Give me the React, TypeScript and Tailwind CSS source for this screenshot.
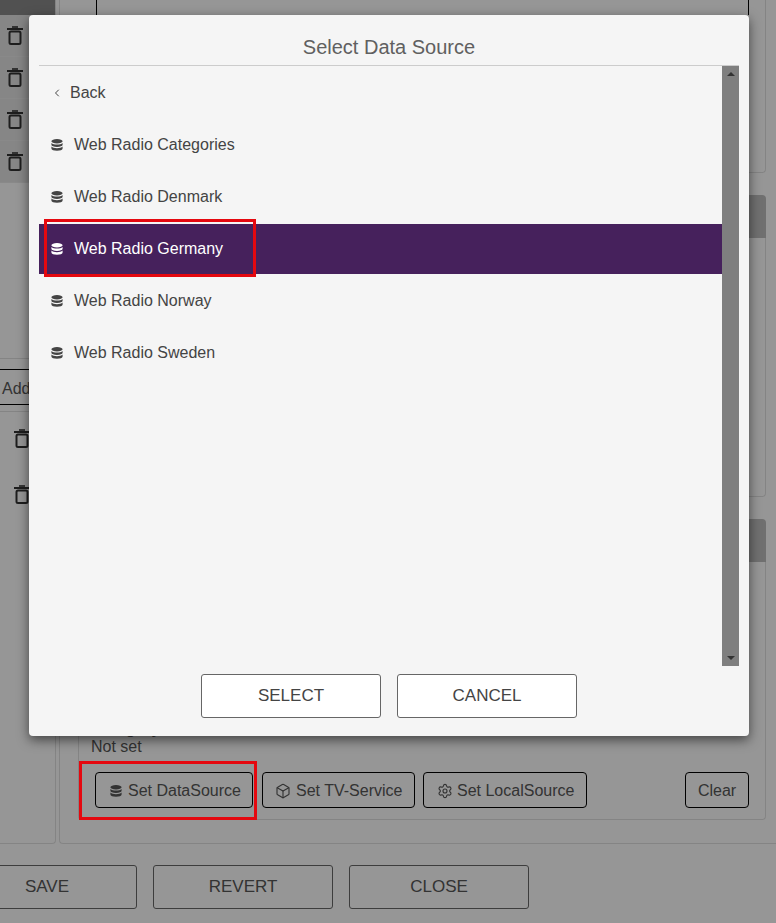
import type { ReactNode } from 'react';
import { ChevronLeft, Box, Settings } from 'lucide-react';

const sources = [
  'Web Radio Categories',
  'Web Radio Denmark',
  'Web Radio Germany',
  'Web Radio Norway',
  'Web Radio Sweden',
];

function DbIcon({ className }: { className?: string }) {
  return (
    <svg viewBox="0 0 12 12" className={className} fill="currentColor">
      <ellipse cx="6" cy="2.3" rx="5.6" ry="2.2" />
      <path d="M.4 3.9C1.5 5.2 3.6 5.6 6 5.6S10.500 5.200 11.600 3.900V5.700C11.600 7 9.100 7.900 6 7.900S.4 7 .4 5.700Z" />
      <path d="M.4 7.500C1.500 8.800 3.600 9.200 6 9.200S10.500 8.800 11.600 7.500V9.500C11.600 10.800 9.100 11.800 6 11.800S.4 10.800 .4 9.500Z" />
    </svg>
  );
}

function TrashIcon() {
  return (
    <svg viewBox="0 0 16 19" className="w-[16px] h-[19px] text-[#333]" fill="none" stroke="currentColor" strokeWidth="2">
      <path d="M5 1H11" strokeWidth="1.6" />
      <path d="M0 3H16" />
      <rect x="2.500" y="5.500" width="11" height="12.500" rx="1.500" />
    </svg>
  );
}

function TrashRow() {
  return (
    <div className="h-[42px] flex items-center pl-[7px] border-b border-[#e4e4e4] bg-[#e0e0e0]">
      <TrashIcon />
    </div>
  );
}

function SmallButton({ icon, label, className }: { icon?: ReactNode; label: string; className?: string }) {
  return (
    <button className={`h-9 flex items-center border border-black rounded-[4px] text-[16px] text-[#555] pt-[2px] ${className ?? ''}`}>
      {icon}
      {label}
    </button>
  );
}

export default function App() {
  return (
    <div className="relative w-[776px] h-[923px] overflow-hidden bg-[#fafafa] font-['Liberation_Sans',Arial,sans-serif] text-[#555]">
      {/* page behind the dialog */}
      <div className="flex h-[844px] gap-[3px]">
        <div className="w-[56px] shrink-0 border-r border-b border-[#ddd] rounded-br-[4px] flex flex-col">
          <div className="h-[15px] bg-[#888]" />
          <TrashRow />
          <TrashRow />
          <TrashRow />
          <TrashRow />
          <div className="h-[176px] border-b border-[#ddd]" />
          <div className="mt-[10px] h-[36px] border-y border-black text-[16px] pl-[2px] pt-[3px] flex items-center">Add</div>
          <div className="mt-[6px] border-t border-[#ddd] pl-[14px] pt-[17px] flex flex-col gap-[37px]">
            <TrashIcon />
            <TrashIcon />
          </div>
        </div>
        <div className="flex-1 border-l border-b border-[#ddd] rounded-bl-[4px] pl-[18px] flex flex-col">
          <div className="w-[688px] flex-1 flex flex-col">
            <div className="h-[173px] border-r border-b border-[#ddd] rounded-br-[4px] pl-[18px]">
              <div className="h-[15px] w-[653px] border-x border-black" />
            </div>
            <div className="mt-[22px] h-[43px] bg-[#bbb] rounded-t-[4px]" />
            <div className="h-[259px] border-r border-b border-[#ddd] rounded-b-[4px]" />
            <div className="mt-[22px] h-[43px] bg-[#bbb] rounded-t-[4px]" />
            <div className="flex-1 border-x border-b border-[#ddd] rounded-b-[4px] pl-[12px] pr-[16px] pt-[158px]">
              <div className="text-[16px] leading-[18px] font-bold">Category</div>
              <div className="text-[16px] leading-[18px]">Not set</div>
              <div className="mt-[16px] ml-[4px] flex items-center gap-2">
                <SmallButton icon={<DbIcon className="w-[12px] h-[12px] mr-[6px]" />} label="Set DataSource" className="w-[158px] pl-[14px] mr-[1px]" />
                <SmallButton icon={<Box size={16} strokeWidth={1.7} className="mr-[5px]" />} label="Set TV-Service" className="w-[153px] pl-[12px]" />
                <SmallButton icon={<Settings size={16} strokeWidth={1.7} className="mr-[4px]" />} label="Set LocalSource" className="w-[164px] pl-[13px]" />
                <SmallButton label="Clear" className="w-[64px] ml-auto justify-center" />
              </div>
            </div>
          </div>
          <div className="h-[23px]" />
        </div>
      </div>
      <div className="mt-[21px] ml-[-43px] flex gap-4 text-[17px]">
        {['SAVE', 'REVERT', 'CLOSE'].map((label) => (
          <button key={label} className="w-[180px] h-[44px] border border-[#666] rounded-[3px] text-[#555]">
            {label}
          </button>
        ))}
      </div>

      {/* backdrop */}
      <div className="absolute inset-0 bg-black/40" />

      {/* callout round the button behind the dialog */}
      <div className="absolute left-[79px] top-[761px] w-[178px] h-[59px] border-[3px] border-[#e5080f]" />

      {/* dialog */}
      <div className="absolute left-[29px] top-[15px] w-[720px] h-[721px] bg-[#f5f5f5] rounded-[4px] shadow-[0_4px_12px_rgba(0,0,0,0.55)] px-[10px] flex flex-col">
        <h2 className="h-[51px] shrink-0 border-b border-[#ccc] flex items-center justify-center pt-[13px] text-[20px] font-normal text-[#606060]">
          Select Data Source
        </h2>
        <div className="h-[600px] flex">
          <div className="flex-1 pt-[2px] text-[16px] text-[#444]">
            <div className="h-[50px] flex items-center pl-[12px] gap-[7px]">
              <ChevronLeft size={12} strokeWidth={2} />
              Back
            </div>
            {sources.map((name, i) => (
              <div
                key={name}
                className={`h-[50px] mt-[2px] flex items-center pl-[12px] gap-[11px] ${i === 2 ? 'bg-[#46215c] text-white' : ''}`}
              >
                <DbIcon className="w-[12px] h-[12px]" />
                {name}
              </div>
            ))}
          </div>
          <div className="w-[17px] bg-[#7f7f7f] flex flex-col justify-between items-center py-[6px]">
            <span className="w-0 h-0 border-x-[4px] border-x-transparent border-b-[4px] border-b-[#333]" />
            <span className="w-0 h-0 border-x-[4px] border-x-transparent border-t-[4px] border-t-[#333]" />
          </div>
        </div>
        <div className="flex justify-center gap-4 pt-[8px] text-[17px]">
          <button className="w-[180px] h-[44px] border border-[#666] rounded-[3px] bg-white text-[#444]">SELECT</button>
          <button className="w-[180px] h-[44px] border border-[#666] rounded-[3px] bg-white text-[#444]">CANCEL</button>
        </div>
      </div>

      {/* callout round the selected row */}
      <div className="absolute left-[44px] top-[219px] w-[212px] h-[58px] border-[3px] border-[#e5080f]" />
    </div>
  );
}
